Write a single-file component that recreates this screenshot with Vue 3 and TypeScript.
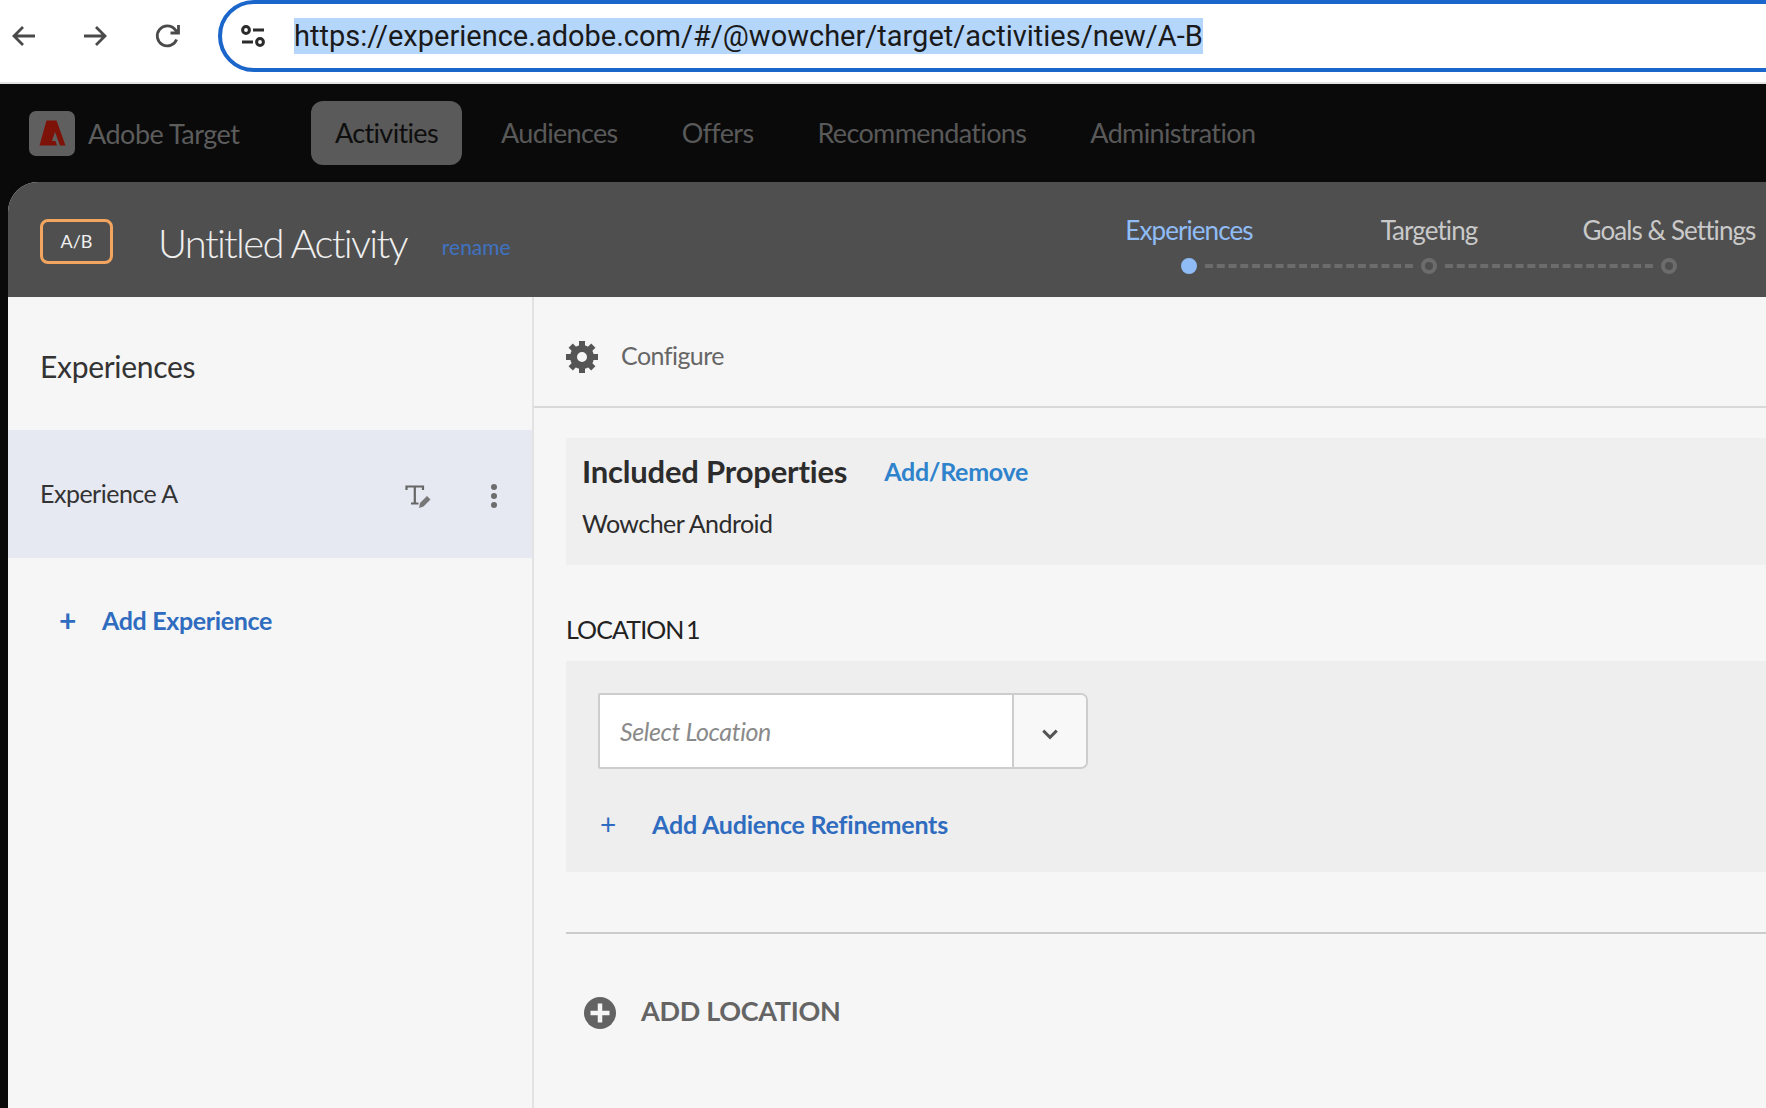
<script setup lang="ts">
const navItems: { label: string; active?: boolean }[] = [
  { label: 'Activities', active: true },
  { label: 'Audiences' },
  { label: 'Offers' },
  { label: 'Recommendations' },
  { label: 'Administration' },
]
const steps = ['Experiences', 'Targeting', 'Goals & Settings']
const gearTeeth = [0, 45, 90, 135, 180, 225, 270, 315]
</script>

<template>
  <div class="page">
    <header class="browser">
      <svg class="bicon" viewBox="0 0 28 28" width="28" height="28"><path d="M25 14H4M13 5l-9 9 9 9" /></svg>
      <svg class="bicon fwd" viewBox="0 0 28 28" width="28" height="28"><path d="M3 14h21M15 5l9 9-9 9" /></svg>
      <svg class="bicon rel" viewBox="0 0 28 28" width="28" height="28"><path d="M22.6 17.5A10 10 0 1 1 21 7.5L24 10.5M24.5 3v8h-8" /></svg>
      <div class="omni">
        <svg class="tune" viewBox="0 0 28 28" width="28" height="28">
          <circle cx="7" cy="8" r="3.4" /><path d="M14 8h11M3 20h11" /><circle cx="21" cy="20" r="3.4" />
        </svg>
        <span class="url">https://experience.adobe.com/#/@wowcher/target/activities/new/A-B</span>
      </div>
    </header>

    <nav class="topnav">
      <div class="brand">
        <span class="tile">
          <svg viewBox="0 0 46 45" width="46" height="45"><path fill="#7d1208" d="M17.500 9.500H27.500L36.500 34.500H31L26 21 23 30H26.500L28 34.500H10.500z" /></svg>
        </span>
        <span class="brand-name">Adobe Target</span>
      </div>
      <div class="nav-items">
        <a v-for="item in navItems" :key="item.label" class="nav-item" :class="{ active: item.active }">{{ item.label }}</a>
      </div>
    </nav>

    <div class="shell">
      <section class="activity">
        <span class="badge">A/B</span>
        <h1 class="title">Untitled Activity</h1>
        <a class="rename">rename</a>
        <ol class="steps">
          <li v-for="(s, i) in steps" :key="s" class="step" :class="{ current: i === 0 }">
            <span class="step-label">{{ s }}</span>
            <span class="dot"></span>
            <span v-if="i < steps.length - 1" class="dash"></span>
          </li>
        </ol>
      </section>

      <div class="body">
        <aside class="side">
          <h2 class="side-title">Experiences</h2>
          <div class="exp-row">
            <span class="exp-name">Experience A</span>
            <svg class="t-icon" viewBox="0 0 28 28" width="28" height="28">
              <path class="t-stroke" d="M2.500 7V3.500H19V7M10.800 3.500V20.500M7 20.500h7.500" />
              <path fill="#777" d="M15 25l1-5 7-7 3.500 3.500-7 7z" />
            </svg>
            <span class="kebab"><i></i><i></i><i></i></span>
          </div>
          <a class="add-exp"><span class="plus">+</span>Add Experience</a>
        </aside>

        <main class="main">
          <div class="config">
            <svg viewBox="-17 -17 34 34" width="34" height="34">
              <rect v-for="a in gearTeeth" :key="a" x="-3" y="-16" width="6" height="7" fill="#555" :transform="`rotate(${a})`" />
              <circle r="8.500" fill="none" stroke="#555" stroke-width="7" />
            </svg>
            <span class="config-label">Configure</span>
          </div>

          <div class="content">
            <div class="props">
              <div class="props-head">
                <h3 class="props-title">Included Properties</h3>
                <a class="props-link">Add/Remove</a>
              </div>
              <div class="props-value">Wowcher Android</div>
            </div>

            <div class="loc-label">LOCATION 1</div>
            <div class="loc-box">
              <div class="select">
                <span class="select-input">Select Location</span>
                <span class="select-btn">
                  <svg viewBox="0 0 16 16" width="18" height="18"><path d="M2 5l6 6 6-6" /></svg>
                </span>
              </div>
              <a class="add-aud"><span class="plus-sm">+</span>Add Audience Refinements</a>
            </div>

            <hr class="rule" />

            <a class="add-loc">
              <svg viewBox="0 0 32 32" width="32" height="32">
                <circle cx="16" cy="16" r="16" fill="#636363" /><path d="M16 6.500v19M6.500 16h19" stroke="#f6f6f6" stroke-width="4.500" />
              </svg>
              <span class="add-loc-text">ADD LOCATION</span>
            </a>
          </div>
        </main>
      </div>
    </div>
  </div>
</template>

<style>
html, body { margin: 0; background: #0a0a0a; }
</style>

<style scoped>
.page {
  width: 1766px;
  height: 1108px;
  overflow: hidden;
  display: flex;
  flex-direction: column;
  background: #0a0a0a;
  font-family: "Lato", "Open Sans", sans-serif;
  color: #2f2f2f;
}
a { cursor: pointer; }
h1, h2, h3 { margin: 0; }

.browser {
  height: 84px;
  box-sizing: border-box;
  background: #fff;
  border-bottom: 2px solid #e3e3e3;
  display: flex;
  align-items: flex-start;
  flex: none;
  overflow: hidden;
}
.bicon {
  flex: none;
  margin: 22px 0 0 10px;
  fill: none;
  stroke: #4a4a4a;
  stroke-width: 2.800;
}
.fwd { margin-left: 43px; }
.rel { margin-left: 45px; }
.omni {
  flex: none;
  width: 1700px;
  height: 72px;
  margin: 0 0 0 36px;
  box-sizing: border-box;
  border: 4px solid #1b66cb;
  border-radius: 36px;
  display: flex;
  align-items: center;
  padding-left: 18px;
}
.tune { fill: none; stroke: #2b2b2b; stroke-width: 3; flex: none; margin-left: -1px; }
.url {
  margin-left: 27px;
  font-family: "Roboto", sans-serif;
  font-size: 29px;
  line-height: 36px;
  background: #b5d6fb;
  color: #1a1a1a;
  white-space: nowrap;
}

.topnav {
  height: 98px;
  flex: none;
  display: flex;
  align-items: center;
  background: #0a0a0a;
  padding-left: 29px;
}
.brand { display: flex; align-items: center; width: 282px; flex: none; }
.tile {
  width: 46px;
  height: 45px;
  border-radius: 7px;
  background: #5f5f5f;
  display: flex;
}
.brand-name { margin-left: 13px; font-size: 27px; color: #5c5c5c; letter-spacing: -0.5px; }
.nav-items { display: flex; align-items: center; }
.nav-item {
  font-size: 27px;
  letter-spacing: -0.65px;
  color: #595959;
  padding: 0 24px;
  height: 64px;
  line-height: 64px;
  margin-right: 16px;
  border-radius: 12px;
  white-space: nowrap;
}
.nav-item.active { background: #5a5a5a; color: #0e0e0e; margin-right: 15px; }

.shell {
  flex: 1;
  min-height: 0;
  margin-left: 8px;
  display: flex;
  flex-direction: column;
  background: #f6f6f6;
  border-top-left-radius: 30px;
  overflow: hidden;
}
.activity {
  height: 115px;
  flex: none;
  background: #4f4f4f;
  display: flex;
  align-items: center;
  padding-left: 32px;
}
.badge {
  width: 73px;
  height: 45px;
  box-sizing: border-box;
  border: 3px solid #f2a55e;
  border-radius: 8px;
  display: flex;
  align-items: center;
  justify-content: center;
  font-size: 18px;
  color: #f0f0f0;
  margin-top: 3px;
  flex: none;
}
.title {
  margin-left: 45px;
  margin-top: 7px;
  font-size: 40px;
  font-weight: 300;
  color: #efefef;
  letter-spacing: -1.7px;
  white-space: nowrap;
}
.rename { margin-left: 35px; margin-top: 13px; font-size: 21px; color: #3f72c2; }
.steps {
  list-style: none;
  margin: 0 57px 0 auto;
  padding: 0;
  position: relative;
  display: flex;
  width: 640px;
  height: 115px;
  flex: none;
}
.step { position: relative; width: 240px; flex: none; }
.step-label {
  position: absolute;
  top: 32px;
  left: 120px;
  transform: translateX(-50%);
  font-size: 26px;
  color: #c9c9c9;
  letter-spacing: -0.92px;
  white-space: nowrap;
}
.step.current .step-label { color: #8fbcf6; }
.dot {
  position: absolute;
  top: 76px;
  left: 112px;
  width: 16px;
  height: 16px;
  box-sizing: border-box;
  border: 4px solid #6c6c6c;
  border-radius: 50%;
}
.step.current .dot { background: #8fbcf6; border-color: #8fbcf6; }
.dash {
  position: absolute;
  top: 82px;
  left: 136px;
  width: 208px;
  border-top: 4px dashed #6c6c6c;
}

.body { flex: 1; min-height: 0; display: flex; }
.side {
  width: 526px;
  flex: none;
  box-sizing: border-box;
  border-right: 2px solid #e2e2e2;
  background: #f6f6f6;
}
.side-title {
  padding: 0 0 0 32px;
  height: 133px;
  line-height: 139px;
  font-size: 30px;
  font-weight: 400;
  letter-spacing: -0.3px;
  color: #333;
}
.exp-row {
  height: 128px;
  background: #e6e9f2;
  display: flex;
  align-items: center;
  padding-left: 32px;
}
.exp-name { font-size: 25px; color: #333; width: 364px; margin-top: -2px; letter-spacing: -0.5px; }
.t-icon { flex: none; margin-top: 5px; }
.t-stroke { fill: none; stroke: #666; stroke-width: 2.200; }
.kebab {
  display: flex;
  flex-direction: column;
  gap: 3px;
  margin-left: 59px;
  margin-top: 4px;
}
.kebab i { width: 6px; height: 6px; border-radius: 50%; background: #6d6d6d; display: block; }
.add-exp {
  display: flex;
  align-items: center;
  margin: 47px 0 0 51px;
  font-size: 25px;
  font-weight: 700;
  letter-spacing: -0.35px;
  color: #2f6cc0;
}
.plus { width: 43px; font-size: 30px; font-weight: 700; line-height: 30px; }

.main { flex: 1; min-width: 0; display: flex; flex-direction: column; }
.config {
  height: 111px;
  flex: none;
  box-sizing: border-box;
  border-bottom: 2px solid #d9d9d9;
  display: flex;
  align-items: center;
  padding: 10px 0 0 31px;
}
.config-label { margin-left: 22px; font-size: 25px; color: #666; margin-top: -4px; letter-spacing: -0.55px; }
.content { padding: 30px 0 0 32px; }
.props {
  height: 127px;
  background: #efefef;
  padding: 14px 0 0 16px;
  box-sizing: border-box;
}
.props-head { display: flex; align-items: center; }
.props-title { font-size: 31px; font-weight: 700; color: #2c2c2c; letter-spacing: -0.2px; }
.props-link { margin-left: 37px; font-size: 25px; font-weight: 700; letter-spacing: -0.3px; color: #2e83cc; }
.props-value { margin-top: 18px; font-size: 25px; color: #2c2c2c; letter-spacing: -0.55px; }
.loc-label { margin-top: 49px; font-size: 25px; line-height: 30px; letter-spacing: -0.9px; word-spacing: -3px; color: #222; }
.loc-box {
  margin-top: 17px;
  height: 211px;
  box-sizing: border-box;
  background: #eeeeee;
  padding: 32px 0 0 32px;
}
.select {
  display: flex;
  width: 490px;
  height: 76px;
  box-sizing: border-box;
  border: 2px solid #cdcdcd;
  border-radius: 2px 7px 7px 2px;
  overflow: hidden;
}
.select-input {
  flex: 1;
  background: #fff;
  display: flex;
  align-items: center;
  padding-left: 20px;
  font-size: 25px;
  font-style: italic;
  color: #8a8a8a;
  letter-spacing: -0.4px;
}
.select-btn {
  width: 74px;
  flex: none;
  box-sizing: border-box;
  border-left: 2px solid #cdcdcd;
  background: #f8f8f8;
  display: flex;
  align-items: center;
  justify-content: center;
  padding-top: 6px;
}
.select-btn svg { fill: none; stroke: #555; stroke-width: 2.600; }
.add-aud {
  display: flex;
  align-items: center;
  margin-top: 40px;
  font-size: 25px;
  font-weight: 700;
  letter-spacing: -0.2px;
  color: #2f6cc0;
}
.plus-sm { width: 52px; font-size: 28px; font-weight: 400; line-height: 28px; margin-left: 2px; }
.rule { margin: 60px 0 0; border: 0; border-top: 2px solid #cccccc; }
.add-loc {
  display: flex;
  align-items: center;
  gap: 25px;
  margin: 63px 0 0 18px;
  font-size: 27px;
  font-weight: 700;
  color: #646464;
  letter-spacing: -0.3px;
}
.add-loc-text { margin-top: -6px; }
</style>
